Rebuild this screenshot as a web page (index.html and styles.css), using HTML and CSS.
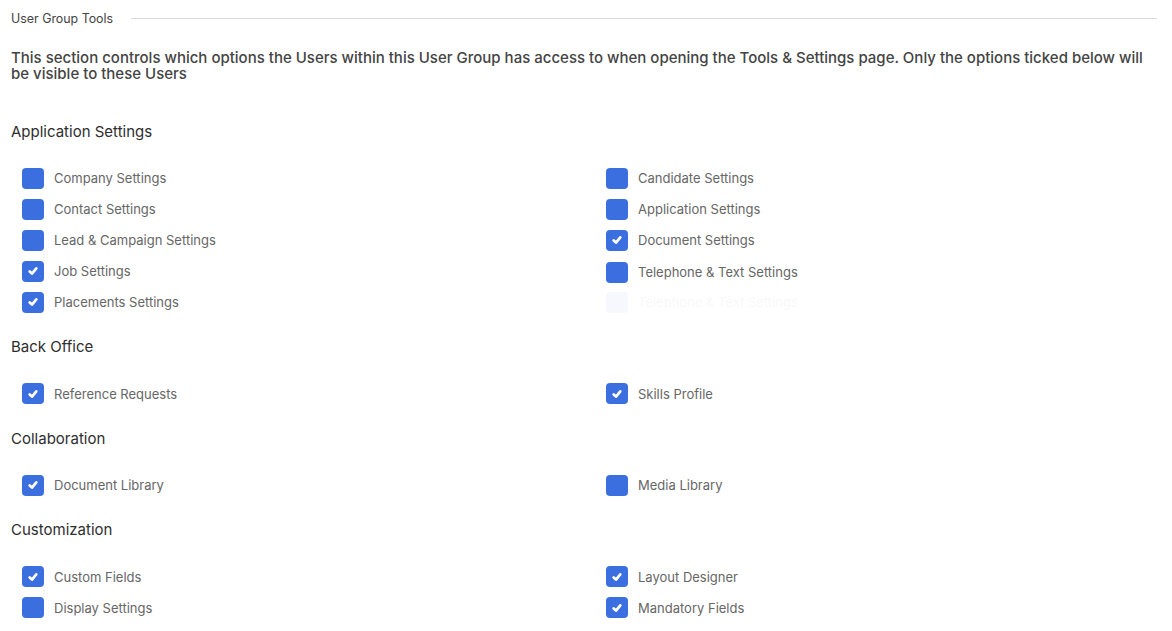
FILE: index.html
```html
<!DOCTYPE html>
<html lang="en">
<head>
  <meta charset="UTF-8">
  <title>User Group Tools</title>
  <link rel="stylesheet" href="styles.css">
</head>
<body>

  <div class="panel">
    <div class="panel-title">
      <span>User Group Tools</span>
      <div class="rule"></div>
    </div>

    <p class="intro">This section controls which options the Users within this User Group has access to when opening the Tools &amp; Settings page. Only the options ticked below will be visible to these Users</p>

    <!-- Application Settings -->
    <div class="group">
      <h3>Application Settings</h3>
      <div class="options">
        <div class="col">
          <label class="opt"><span class="box"></span>Company Settings</label>
          <label class="opt"><span class="box"></span>Contact Settings</label>
          <label class="opt"><span class="box"></span>Lead &amp; Campaign Settings</label>
          <label class="opt"><span class="box on"><svg viewBox="0 0 12 12"><polyline points="2.7,6.4 5,8.6 9.3,3.4"/></svg></span>Job Settings</label>
          <label class="opt"><span class="box on"><svg viewBox="0 0 12 12"><polyline points="2.7,6.4 5,8.6 9.3,3.4"/></svg></span>Placements Settings</label>
        </div>
        <div class="col">
          <label class="opt"><span class="box"></span>Candidate Settings</label>
          <label class="opt"><span class="box"></span>Application Settings</label>
          <label class="opt"><span class="box on"><svg viewBox="0 0 12 12"><polyline points="2.7,6.4 5,8.6 9.3,3.4"/></svg></span>Document Settings</label>
          <label class="opt shift"><span class="box"></span>Telephone &amp; Text Settings</label>
          <label class="opt ghost"><span class="box"></span>Telephone &amp; Text Settings</label>
        </div>
      </div>
    </div>

    <!-- Back Office -->
    <div class="group">
      <h3>Back Office</h3>
      <div class="options">
        <div class="col">
          <label class="opt"><span class="box on"><svg viewBox="0 0 12 12"><polyline points="2.7,6.4 5,8.6 9.3,3.4"/></svg></span>Reference Requests</label>
        </div>
        <div class="col">
          <label class="opt"><span class="box on"><svg viewBox="0 0 12 12"><polyline points="2.7,6.4 5,8.6 9.3,3.4"/></svg></span>Skills Profile</label>
        </div>
      </div>
    </div>

    <!-- Collaboration -->
    <div class="group">
      <h3>Collaboration</h3>
      <div class="options">
        <div class="col">
          <label class="opt"><span class="box on"><svg viewBox="0 0 12 12"><polyline points="2.7,6.4 5,8.6 9.3,3.4"/></svg></span>Document Library</label>
        </div>
        <div class="col">
          <label class="opt"><span class="box"></span>Media Library</label>
        </div>
      </div>
    </div>

    <!-- Customization -->
    <div class="group">
      <h3>Customization</h3>
      <div class="options">
        <div class="col">
          <label class="opt"><span class="box on"><svg viewBox="0 0 12 12"><polyline points="2.7,6.4 5,8.6 9.3,3.4"/></svg></span>Custom Fields</label>
          <label class="opt"><span class="box"></span>Display Settings</label>
        </div>
        <div class="col">
          <label class="opt"><span class="box on"><svg viewBox="0 0 12 12"><polyline points="2.7,6.4 5,8.6 9.3,3.4"/></svg></span>Layout Designer</label>
          <label class="opt"><span class="box on"><svg viewBox="0 0 12 12"><polyline points="2.7,6.4 5,8.6 9.3,3.4"/></svg></span>Mandatory Fields</label>
        </div>
      </div>
    </div>
  </div>

</body>
</html>
```

FILE: styles.css
```css
body {
  margin: 0;
  padding: 0;
  background-color: #fff;
  font-family: 'Inter', 'Noto Sans', sans-serif;
  color: #333;
}

.panel {
  padding: 8px 15px 0 11px;
}

.panel-title {
  display: flex;
  align-items: center;
  gap: 18px;
  height: 20px;
  font-size: 12.4px;
  color: #444;
}

.panel-title .rule {
  flex: 1;
  height: 1px;
  background-color: #dcdcdc;
}

.intro {
  margin: 22px 0 38.5px;
  font-size: 15px;
  font-weight: 500;
  line-height: 16px;
  color: #444;
}

.group {
  margin-bottom: 23px;
}

.group h3 {
  margin: 0 0 24.5px;
  font-size: 15px;
  font-weight: 400;
  line-height: 22px;
  color: #2e2e2e;
}

.options {
  display: grid;
  grid-template-columns: 584px 1fr;
}

.col {
  display: flex;
  flex-direction: column;
  gap: 9px;
  padding-left: 11px;
}

.opt {
  display: flex;
  align-items: center;
  gap: 10px;
  height: 22px;
  font-size: 13px;
  color: #666;
}

.opt.shift {
  margin-top: 1px;
}

.opt.ghost {
  margin-top: -1px;
  opacity: 0.04;
}

.box {
  width: 22px;
  height: 21px;
  border-radius: 4px;
  background-color: #3b6fe0;
  display: flex;
  align-items: center;
  justify-content: center;
}

.box svg {
  width: 12px;
  height: 12px;
  fill: none;
  stroke: #fff;
  stroke-width: 2.7;
  stroke-linecap: round;
  stroke-linejoin: round;
}
```
